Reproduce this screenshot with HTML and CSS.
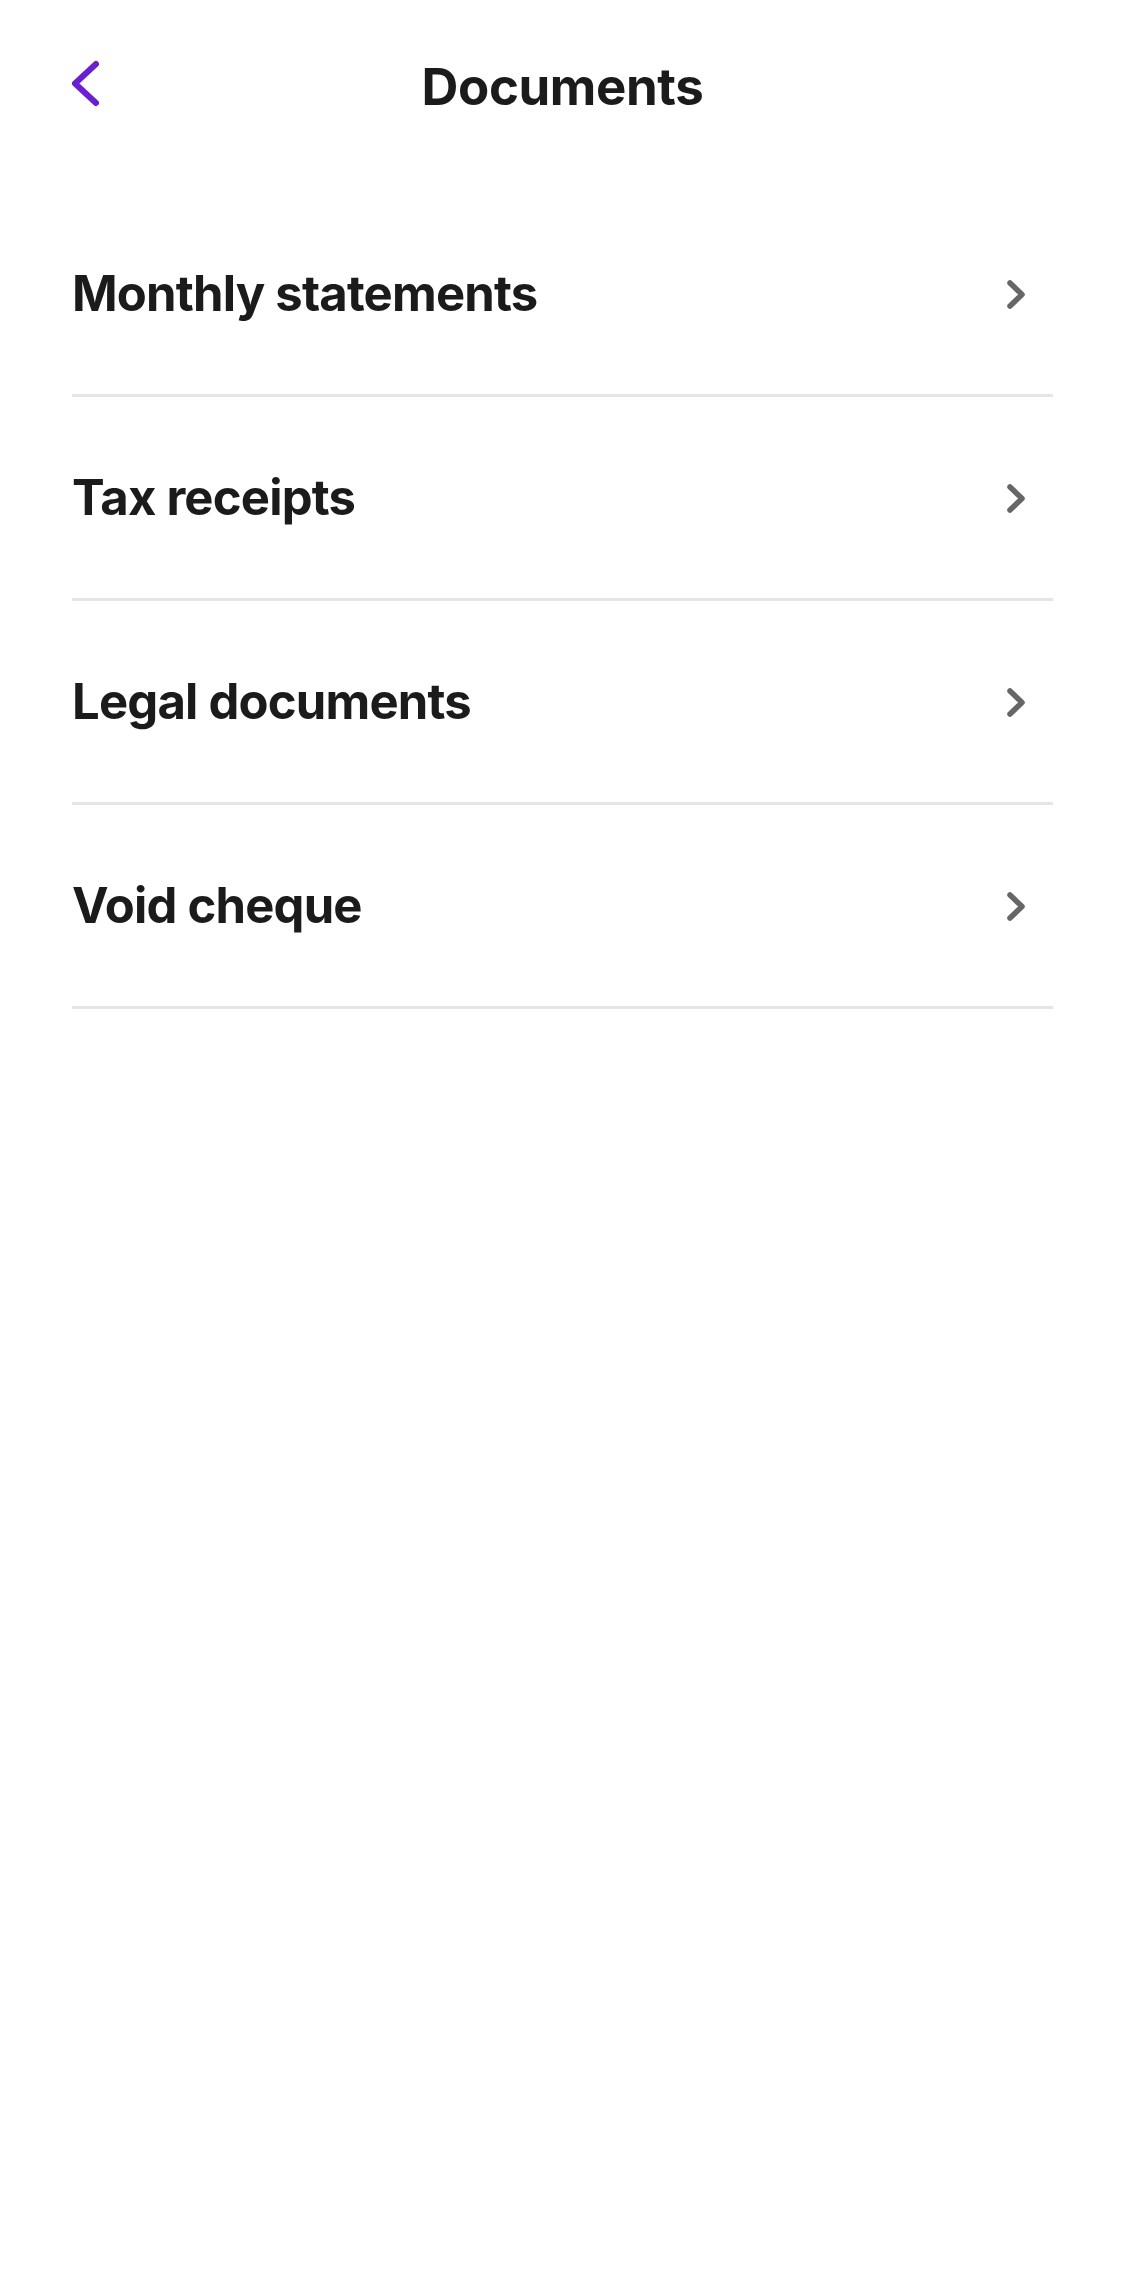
FILE: index.html
```html
<!DOCTYPE html>
<html lang="en">
<head>
<meta charset="utf-8">
<title>Documents</title>
<link rel="stylesheet" href="styles.css">
</head>
<body>
<div class="screen">
  <header class="header">
    <button class="back" aria-label="Back">
      <svg width="34" height="52" viewBox="0 0 34 52"><polyline points="27,5 6,24.5 27,44" fill="none" stroke="#6a1fd0" stroke-width="6" stroke-linecap="round" stroke-linejoin="round"/></svg>
    </button>
    <h1 class="title">Documents</h1>
  </header>
  <ul class="list">
    <li class="row"><span class="label">Monthly statements</span><svg class="chev" width="24" height="34" viewBox="0 0 24 34"><polyline points="6,5 18,16.5 6,28" fill="none" stroke="#666666" stroke-width="5.5" stroke-linecap="round" stroke-linejoin="round"/></svg></li>
    <li class="row"><span class="label">Tax receipts</span><svg class="chev" width="24" height="34" viewBox="0 0 24 34"><polyline points="6,5 18,16.5 6,28" fill="none" stroke="#666666" stroke-width="5.5" stroke-linecap="round" stroke-linejoin="round"/></svg></li>
    <li class="row"><span class="label">Legal documents</span><svg class="chev" width="24" height="34" viewBox="0 0 24 34"><polyline points="6,5 18,16.5 6,28" fill="none" stroke="#666666" stroke-width="5.5" stroke-linecap="round" stroke-linejoin="round"/></svg></li>
    <li class="row"><span class="label">Void cheque</span><svg class="chev" width="24" height="34" viewBox="0 0 24 34"><polyline points="6,5 18,16.5 6,28" fill="none" stroke="#666666" stroke-width="5.5" stroke-linecap="round" stroke-linejoin="round"/></svg></li>
  </ul>
</div>
</body>
</html>
```
FILE: styles.css
```css
html, body {
  margin: 0;
  padding: 0;
  background: #ffffff;
}
body {
  font-family: Inter, "Liberation Sans", sans-serif;
  color: #1b1b1b;
}
.screen {
  width: 1125px;
  min-height: 2284px;
  box-sizing: border-box;
  padding: 0 72px;
}
.header {
  position: relative;
  height: 176px;
  display: flex;
  align-items: center;
  justify-content: center;
}
.back {
  position: absolute;
  left: -3px;
  top: 59px;
  padding: 0;
  margin: 0;
  border: 0;
  background: none;
  width: 34px;
  height: 52px;
  display: block;
}
.back svg { display: block; }
.title {
  margin: 0 0 4px 0;
  font-size: 51px;
  font-weight: 700;
  letter-spacing: -0.4px;
  line-height: 1;
}
.list {
  list-style: none;
  margin: 17px 0 0 0;
  padding: 0;
}
.row {
  height: 201px;
  border-bottom: 3px solid #e5e5e5;
  display: flex;
  align-items: center;
  justify-content: space-between;
}
.label {
  font-size: 49px;
  font-weight: 700;
  letter-spacing: -0.8px;
  line-height: 1;
}
.chev {
  display: block;
  margin-right: 25px;
  margin-top: 2px;
}
```
